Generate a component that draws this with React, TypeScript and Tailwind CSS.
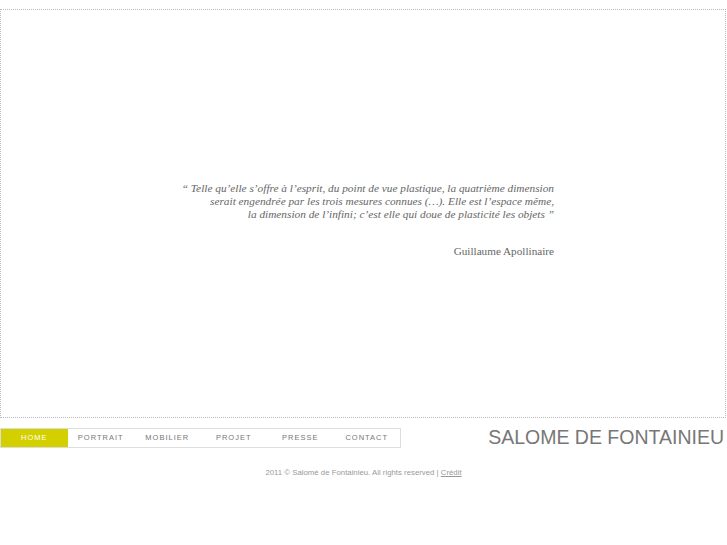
import React from "react";

const navItems = ["HOME", "PORTRAIT", "MOBILIER", "PROJET", "PRESSE", "CONTACT"];

export default function App() {
  return (
    <div className="w-[727px] h-[545px] bg-white overflow-hidden">
      <div className="h-[9px]" />
      <div className="w-[726px] h-[409px] border border-dotted border-[#bbbbbb] flex flex-col">
        <div className="h-[172px]" />
        <div className="flex justify-end pr-[171px]">
          <div
            className="text-right italic text-[11.3px] leading-[13px] text-[#666666]"
            style={{ fontFamily: '"Liberation Serif", "Times New Roman", serif' }}
          >
            <p className="whitespace-nowrap">“ Telle qu’elle s’offre à l’esprit, du point de vue plastique, la quatrième dimension</p>
            <p className="whitespace-nowrap">serait engendrée par les trois mesures connues (…). Elle est l’espace même,</p>
            <p className="whitespace-nowrap">la dimension de l’infini; c’est elle qui doue de plasticité les objets ”</p>
            <p className="not-italic text-[11.2px] mt-[24px] whitespace-nowrap">Guillaume Apollinaire</p>
          </div>
        </div>
      </div>
      <div className="flex items-center justify-between mt-[10px] pr-[3px]">
        <div
          className="flex w-[401px] h-[20px] border border-[#dddddd]"
          style={{ fontFamily: '"Liberation Sans", Arial, sans-serif' }}
        >
          {navItems.map((item, i) => (
            <div
              key={item}
              className={
                i === 0
                  ? "w-[66.5px] flex items-center justify-center bg-[#d4d000] text-white text-[7.5px] tracking-[1px]"
                  : "w-[66.5px] flex items-center justify-center text-[#777777] text-[7.5px] tracking-[1px]"
              }
            >
              {item}
            </div>
          ))}
        </div>
        <div
          className="text-[19.5px] leading-[20px] text-[#777777] mt-[-3px]"
          style={{ fontFamily: '"Liberation Sans", Arial, sans-serif' }}
        >
          SALOME DE FONTAINIEU
        </div>
      </div>
      <div
        className="mt-[19px] text-center text-[7.8px] text-[#999999]"
        style={{ fontFamily: '"Liberation Sans", Arial, sans-serif' }}
      >
        2011 © Salomé de Fontainieu. All rights reserved | <span className="underline">Crédit</span>
      </div>
    </div>
  );
}
